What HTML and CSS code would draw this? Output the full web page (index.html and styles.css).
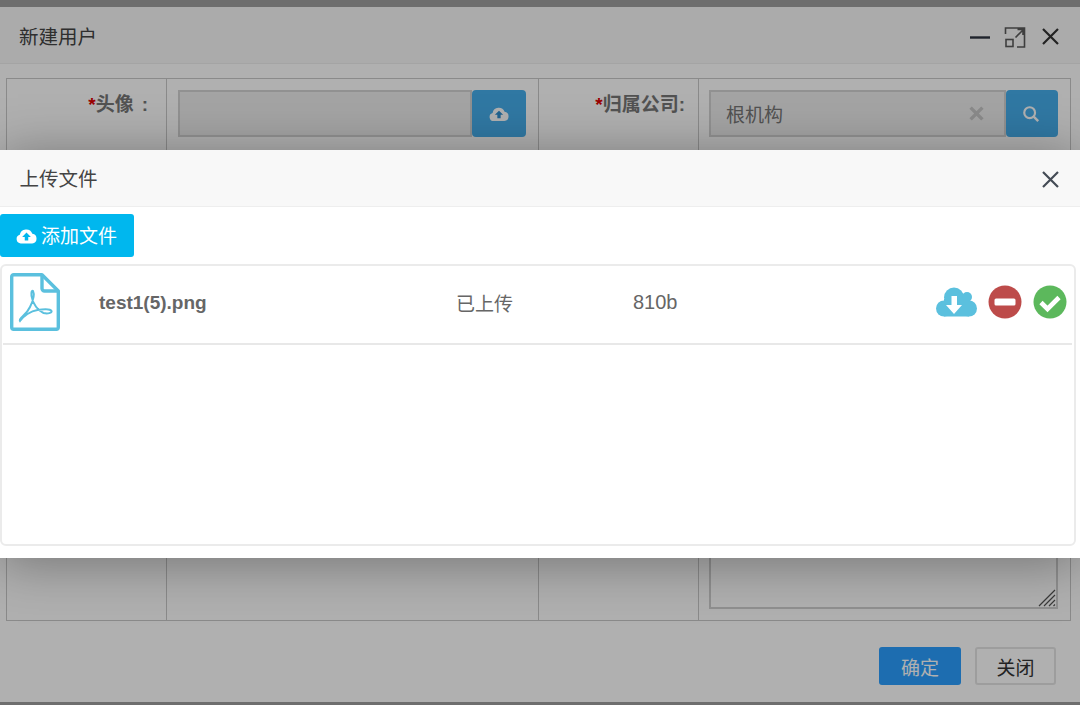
FILE: index.html
```html
<!DOCTYPE html>
<html lang="zh">
<head>
<meta charset="utf-8">
<title>上传文件</title>
<link rel="stylesheet" href="styles.css">
</head>
<body>
<div class="window">
  <header class="win-head">
    <span class="win-title">新建用户</span>
    <div class="win-tools">
      <svg class="tool" viewBox="0 0 24 24"><path d="M2 12.500h20" stroke="#2e3440" stroke-width="2.400" fill="none"/></svg>
      <svg class="tool" viewBox="0 0 24 24"><path d="M2.500 9V3h19v19H14M12.500 12.500L20 5M14.500 4.500H20V10" stroke="#5a5a5a" stroke-width="1.600" fill="none"/><rect x="3" y="14.500" width="7" height="7" stroke="#5a5a5a" stroke-width="1.600" fill="none"/></svg>
      <svg class="tool" viewBox="0 0 24 24"><path d="M5 4l15 15M20 4L5 19" stroke="#333" stroke-width="2.200" fill="none"/></svg>
    </div>
  </header>
  <div class="win-body">
    <div class="form-grid">
      <div class="cell label"><span class="req">*</span>头像<span class="colon">:</span></div>
      <div class="cell field">
        <div class="input-group">
          <div class="input"></div>
          <div class="addon addon-upload">
            <svg class="addon-icon" viewBox="0 0 24 18"><path fill="#fff" d="M5.500 17.500A5 5 0 0 1 4.300 7.700 7.500 7.500 0 0 1 18.700 6.400 5.600 5.600 0 0 1 18.500 17.500z"/><path fill="#2f8fd0" d="M12 5l-5 5h3v4h4v-4h3z"/></svg>
          </div>
        </div>
      </div>
      <div class="cell label"><span class="req">*</span>归属公司:</div>
      <div class="cell field last">
        <div class="input-group">
          <div class="input input-value">
            <span>根机构</span>
            <svg class="clear" viewBox="0 0 14 14"><path d="M1.500 1.500l11 11M12.500 1.500l-11 11" stroke="#c8c8c8" stroke-width="3.200" fill="none"/></svg>
          </div>
          <div class="addon addon-search">
            <svg class="addon-icon" viewBox="0 0 20 20"><circle cx="8.500" cy="8.500" r="6" fill="none" stroke="#fff" stroke-width="2.400"/><path d="M13 13l5 5" stroke="#fff" stroke-width="2.800" fill="none"/></svg>
          </div>
        </div>
        <div class="textarea">
          <svg class="grip" viewBox="0 0 18 18"><path d="M1 17L17 1M6 17L17 6M11 17l6-6M15.500 17l1.500-1.500" stroke="#555" stroke-width="1.200" fill="none"/></svg>
        </div>
      </div>
    </div>
    <div class="win-foot">
      <div class="btn btn-primary">确定</div>
      <div class="btn btn-default">关闭</div>
    </div>
  </div>
</div>
<div class="backdrop"></div>
<section class="modal">
  <header class="modal-head">
    <span class="modal-title">上传文件</span>
    <svg class="tool" viewBox="0 0 24 24"><path d="M5 4l15 15M20 4L5 19" stroke="#444b55" stroke-width="2.200" fill="none"/></svg>
  </header>
  <div class="modal-body">
    <div class="add-btn">
      <svg class="add-icon" viewBox="0 0 24 18"><path fill="#fff" d="M5.500 17.500A5 5 0 0 1 4.300 7.700 7.500 7.500 0 0 1 18.700 6.400 5.600 5.600 0 0 1 18.500 17.500z"/><path fill="#00b7ee" d="M12 5l-5 5h3v4h4v-4h3z"/></svg>
      <span>添加文件</span>
    </div>
    <div class="file-panel">
      <div class="file-row">
        <svg class="pdf" viewBox="0 0 50 58">
          <path d="M1.700 3.700a2 2 0 0 1 2-2H32L48.300 18v36.300a2 2 0 0 1-2 2H3.700a2 2 0 0 1-2-2z" fill="none" stroke="#5bc0de" stroke-width="3.400" stroke-linejoin="round"/>
          <path d="M32 2v13.500a2.500 2.500 0 0 0 2.500 2.500H48" fill="none" stroke="#5bc0de" stroke-width="3.400"/>
          <path d="M10 48c-2-3 6-5 10-14 3-6 5-12 3-16-1-1-2 1-1.500 5 1 8 7 15 12 17 4 1 9 0 8-2-1-2-8-2-14-1-7 1-14 6-17.500 11z" fill="none" stroke="#5bc0de" stroke-width="2"/>
        </svg>
        <span class="file-text file-name">test1(5).png</span>
        <span class="file-text">已上传</span>
        <span class="file-text file-size">810b</span>
        <div class="file-actions">
          <svg class="act-cloud" viewBox="0 0 41 30">
            <g fill="#5bc0de"><circle cx="18" cy="10.500" r="10"/><circle cx="31" cy="10" r="5"/><circle cx="8" cy="21.500" r="8"/><circle cx="33" cy="21.500" r="8"/><rect x="8" y="12" width="25" height="17.500"/></g>
            <path fill="#fff" d="M15.500 9h5.500v9h5l-8 9-8-9h5.500z"/>
          </svg>
          <svg class="act-round" viewBox="0 0 34 34"><circle cx="17" cy="17" r="16.500" fill="#bd4b4a"/><rect x="6.500" y="13.500" width="21" height="7" rx="1.500" fill="#fff"/></svg>
          <svg class="act-round" viewBox="0 0 34 34"><circle cx="17" cy="17" r="16.500" fill="#5cb85c"/><path d="M8 17.500l6.500 6.500L26 12.500" fill="none" stroke="#fff" stroke-width="4.600"/></svg>
        </div>
      </div>
    </div>
  </div>
</section>
</body>
</html>
```
FILE: styles.css
```css
* { box-sizing: border-box; }
html, body { margin: 0; height: 705px; overflow: hidden; }
body {
  background: #a0a0a0;
  padding: 7px 0 3px;
  font-family: "Liberation Sans", "Noto Sans CJK SC", sans-serif;
  color: #444;
}
.window {
  height: 695px;
  background: #fff;
  display: flex;
  flex-direction: column;
}
.win-head {
  height: 57px;
  background: #f8f8f8;
  border-bottom: 1px solid #eee;
  padding: 4px 18px 0 19px;
  display: flex;
  align-items: center;
  justify-content: space-between;
}
.win-title, .modal-title { font-size: 19.5px; line-height: 26px; margin-bottom: 1px; }
.win-tools { display: flex; gap: 11px; }
.tool { width: 24px; height: 24px; display: block; }
.win-body { flex: 1; padding: 14px 9px 0 6px; display: flex; flex-direction: column; }
.form-grid {
  height: 543px;
  display: grid;
  grid-template-columns: 160px 372px 160px 371px;
  border: 1px solid #c8c8c8;
}
.cell { border-right: 1px solid #c8c8c8; }
.cell.last { border-right: 0; }
.label {
  padding: 13px 13px 0 0;
  text-align: right;
  font-size: 19px;
  font-weight: 700;
  line-height: 26px;
  color: #777;
}
.colon { margin: 0 5px 0 8px; }
.req { color: #e00000; }
.field {
  padding: 11px 12px 11px 11px;
  display: flex;
  flex-direction: column;
  justify-content: space-between;
}
.field.last { padding-left: 10px; }
.input-group { display: flex; height: 47px; }
.input {
  flex: 1;
  background: #eee;
  border: 2px solid #d2d2d2;
  display: flex;
  align-items: center;
  justify-content: space-between;
  padding: 0 20px 0 15px;
  font-size: 19px;
  color: #777;
}
.clear { width: 15px; height: 15px; }
.addon {
  background: #46aeec;
  border-radius: 4px;
  display: flex;
  align-items: center;
  justify-content: center;
}
.addon-upload { width: 54px; }
.addon-search { width: 52px; padding-right: 3px; }
.addon-icon { width: 20px; height: 16px; }
.addon-search .addon-icon { height: 18px; }
.textarea {
  position: relative;
  height: 60px;
  border: 2px solid #cfcfcf;
  border-top: 0;
  background: #fff;
}
.grip { position: absolute; right: 0; bottom: 0; width: 18px; height: 18px; }
.win-foot {
  display: flex;
  justify-content: flex-end;
  gap: 14px;
  padding: 26px 15px 0 0;
}
.btn {
  width: 81px;
  height: 38px;
  border-radius: 3px;
  display: flex;
  align-items: center;
  justify-content: center;
  font-size: 19px;
}
.btn-primary { background: #2a9fff; color: #fff; width: 82px; }
.btn-default { border: 2px solid #e4e4e4; background: #fff; color: #333; }
.backdrop { position: absolute; inset: 0; background: rgba(0, 0, 0, .31); }
.modal {
  position: absolute;
  left: 0;
  top: 150px;
  width: 1080px;
  height: 408px;
  background: #fff;
  box-shadow: 0 5px 50px rgba(0, 0, 0, .35);
}
.modal-head {
  height: 57px;
  background: #f8f8f8;
  border-bottom: 1px solid #eee;
  padding: 3px 18px 0 19.500px;
  display: flex;
  align-items: center;
  justify-content: space-between;
}
.modal-body { padding: 7px 4px 0 0; display: flex; flex-direction: column; align-items: flex-start; }
.add-btn {
  width: 134px;
  height: 43px;
  background: #00b7ee;
  border-radius: 3px;
  color: #fff;
  font-size: 19px;
  display: flex;
  align-items: center;
  gap: 4px;
  padding: 0 0 2px 16px;
}
.add-icon { width: 21px; height: 16px; margin-top: 2px; }
.file-panel {
  margin-top: 7px;
  width: 1076px;
  height: 282px;
  border: 2px solid #ebebeb;
  border-radius: 6px;
}
.file-row {
  height: 79px;
  margin: 0 2px 0 1px;
  border-bottom: 2px solid #e8e8e8;
  display: grid;
  grid-template-columns: 89px 357px 177px 1fr auto;
  align-items: center;
  padding: 0 5px 6px 7px;
  font-size: 19px;
  color: #666;
}
.pdf { width: 50px; height: 58px; }
.file-text { padding-top: 2px; }
.file-name { font-weight: 700; }
.file-size { font-size: 20px; }
.file-actions { display: flex; align-items: center; gap: 11px; }
.act-cloud { width: 41px; height: 30px; }
.act-round { width: 34px; height: 34px; }
```
